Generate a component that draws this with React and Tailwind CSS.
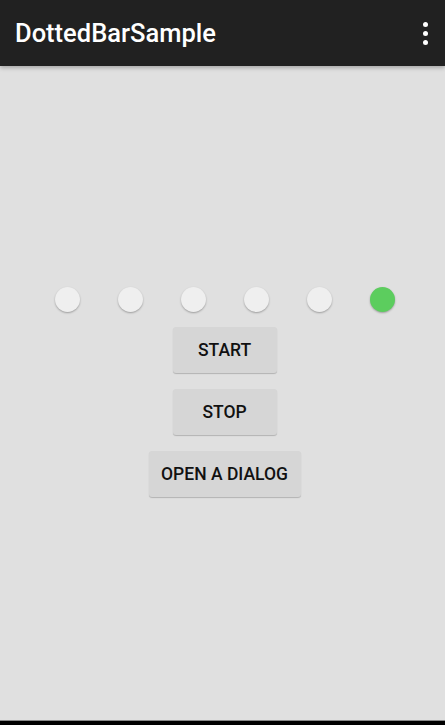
export default function App() {
  const dots = [false, false, false, false, false, true]

  return (
    <div className="w-[445px] h-[725px] flex flex-col bg-[#e0e0e0] overflow-hidden" style={{ fontFamily: 'Roboto, "Noto Sans", sans-serif' }}>
      <div className="relative z-10 h-[66px] shrink-0 bg-[#212121] flex items-center justify-between pl-[15px] pr-[17px] shadow-[0_2px_4px_rgba(0,0,0,0.25)]">
        <span className="text-[25.5px] font-medium text-white">DottedBarSample</span>
        <div className="flex flex-col gap-[4px] items-center">
          <span className="w-[5px] h-[5px] rounded-full bg-white" />
          <span className="w-[5px] h-[5px] rounded-full bg-white" />
          <span className="w-[5px] h-[5px] rounded-full bg-white" />
        </div>
      </div>

      <div className="flex-1 flex flex-col items-center pt-[221px] pl-[4px]">
        <div className="flex gap-[38px]">
          {dots.map((on, i) => (
            <span
              key={i}
              className={`w-[25px] h-[25px] rounded-full shadow-[0_1px_2px_rgba(0,0,0,0.3)] ${on ? 'bg-[#5ccd5e]' : 'bg-[#efefef]'}`}
            />
          ))}
        </div>

        <div className="flex flex-col items-center gap-[16px] mt-[15px]">
          <button className="w-[104px] h-[46px] rounded-[3px] bg-[#d6d6d6] shadow-[0_1px_1px_rgba(0,0,0,0.2)] text-[17.5px] font-medium text-[#111]">START</button>
          <button className="w-[104px] h-[46px] rounded-[3px] bg-[#d6d6d6] shadow-[0_1px_1px_rgba(0,0,0,0.2)] text-[17.5px] font-medium text-[#111]">STOP</button>
          <button className="w-[152px] h-[46px] rounded-[3px] bg-[#d6d6d6] shadow-[0_1px_1px_rgba(0,0,0,0.2)] text-[17.5px] font-medium text-[#111]">OPEN A DIALOG</button>
        </div>
      </div>

      <div className="h-[5px] shrink-0 bg-black border-t border-[#888]" />
    </div>
  )
}
